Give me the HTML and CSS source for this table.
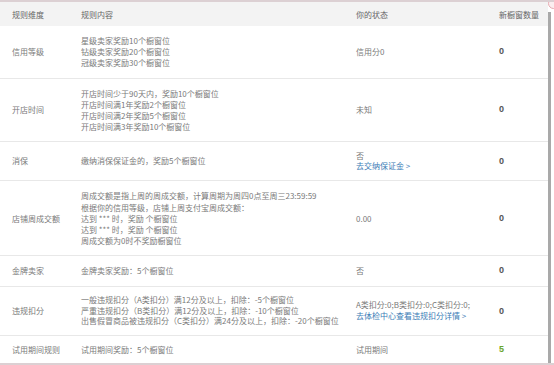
FILE: index.html
```html
<!DOCTYPE html>
<html lang="zh-CN">
<head>
<meta charset="utf-8">
<title>橱窗规则</title>
<link rel="stylesheet" href="styles.css">
</head>
<body>
<div class="frame">
  <div class="panel">
    <table class="rules">
      <colgroup>
        <col class="c1"><col class="c2"><col class="c3"><col class="c4">
      </colgroup>
      <thead>
        <tr>
          <th>规则维度</th>
          <th>规则内容</th>
          <th>你的状态</th>
          <th>新橱窗数量</th>
        </tr>
      </thead>
      <tbody>
        <tr>
          <td>信用等级</td>
          <td>星级卖家奖励10个橱窗位<br>钻级卖家奖励20个橱窗位<br>冠级卖家奖励30个橱窗位</td>
          <td>信用分0</td>
          <td class="num">0</td>
        </tr>
        <tr>
          <td>开店时间</td>
          <td>开店时间少于90天内，奖励10个橱窗位<br>开店时间满1年奖励2个橱窗位<br>开店时间满2年奖励5个橱窗位<br>开店时间满3年奖励10个橱窗位</td>
          <td>未知</td>
          <td class="num">0</td>
        </tr>
        <tr class="tight">
          <td>消保</td>
          <td>缴纳消保保证金的，奖励5个橱窗位</td>
          <td>否<br><a class="link" href="#">去交纳保证金 &gt;</a></td>
          <td class="num">0</td>
        </tr>
        <tr>
          <td>店铺周成交额</td>
          <td>周成交额是指上周的周成交额，计算周期为周四0点至周三23:59:59<br>根据你的信用等级，店铺上周支付宝周成交额：<br>达到 *** 时，奖励 个橱窗位<br>达到 *** 时，奖励 个橱窗位<br>周成交额为0时不奖励橱窗位</td>
          <td>0.00</td>
          <td class="num">0</td>
        </tr>
        <tr>
          <td>金牌卖家</td>
          <td>金牌卖家奖励：5个橱窗位</td>
          <td>否</td>
          <td class="num">0</td>
        </tr>
        <tr class="tight">
          <td>违规扣分</td>
          <td>一般违规扣分（A类扣分）满12分及以上，扣除：-5个橱窗位<br>严重违规扣分（B类扣分）满12分及以上，扣除：-10个橱窗位<br>出售假冒商品被违规扣分（C类扣分）满24分及以上，扣除：-20个橱窗位</td>
          <td>A类扣分:0;B类扣分:0;C类扣分:0;<br><a class="link" href="#">去体检中心查看违规扣分详情 &gt;</a></td>
          <td class="num">0</td>
        </tr>
        <tr class="last">
          <td>试用期间规则</td>
          <td>试用期间奖励：5个橱窗位</td>
          <td>试用期间</td>
          <td class="num green">5</td>
        </tr>
      </tbody>
    </table>
  </div>
  <div class="edge"></div>
  <span class="close"></span>
</div>
</body>
</html>
```
FILE: styles.css
```css
html, body {
  margin: 0;
  padding: 0;
  background: #ffffff;
}

body {
  font-family: "Noto Sans CJK SC", "Noto Sans", sans-serif;
  font-size: 8px;
  color: #7a7a7a;
}

.frame {
  position: relative;
  display: flex;
  width: 554px;
  height: 365px;
  overflow: hidden;
  border-top: 2px solid #dcd0d3;
  border-bottom: 2px solid #dcd0d3;
  box-sizing: border-box;
}

.panel {
  width: 548px;
  flex: none;
}

.edge {
  width: 3px;
  margin-top: 10px;
  background: #a9a9a9;
  flex: none;
}

.close {
  position: absolute;
  top: -4px;
  right: -5px;
  width: 9px;
  height: 9px;
  border: 1px solid #e6a9b0;
  border-radius: 50%;
  background: #fbeef0;
}

.rules {
  width: 548px;
  border-collapse: collapse;
  table-layout: fixed;
}

.c1 { width: 69px; }
.c2 { width: 275px; }
.c3 { width: 143px; }
.c4 { width: 61px; }

.rules th {
  height: 24px;
  padding: 0 0 0 12px;
  background: #f3f3f3;
  font-weight: normal;
  text-align: left;
  color: #666666;
  line-height: 11px;
}

.rules td {
  padding: 9px 0 9px 12px;
  line-height: 11.2px;
  white-space: nowrap;
  vertical-align: middle;
  border-bottom: 1px solid #e8e8e8;
}

.rules tr.tight td {
  padding-top: 8.5px;
  padding-bottom: 8.5px;
  line-height: 10.5px;
}

.rules tr.last td {
  padding-top: 8px;
  padding-bottom: 8px;
  border-bottom: none;
}

.rules td.num {
  font-family: "Liberation Sans", Arial, sans-serif;
  font-weight: bold;
  font-size: 9px;
  color: #555555;
}

.rules td.green {
  color: #6aa52c;
}

.link {
  color: #3b7cb6;
  text-decoration: none;
}
```
